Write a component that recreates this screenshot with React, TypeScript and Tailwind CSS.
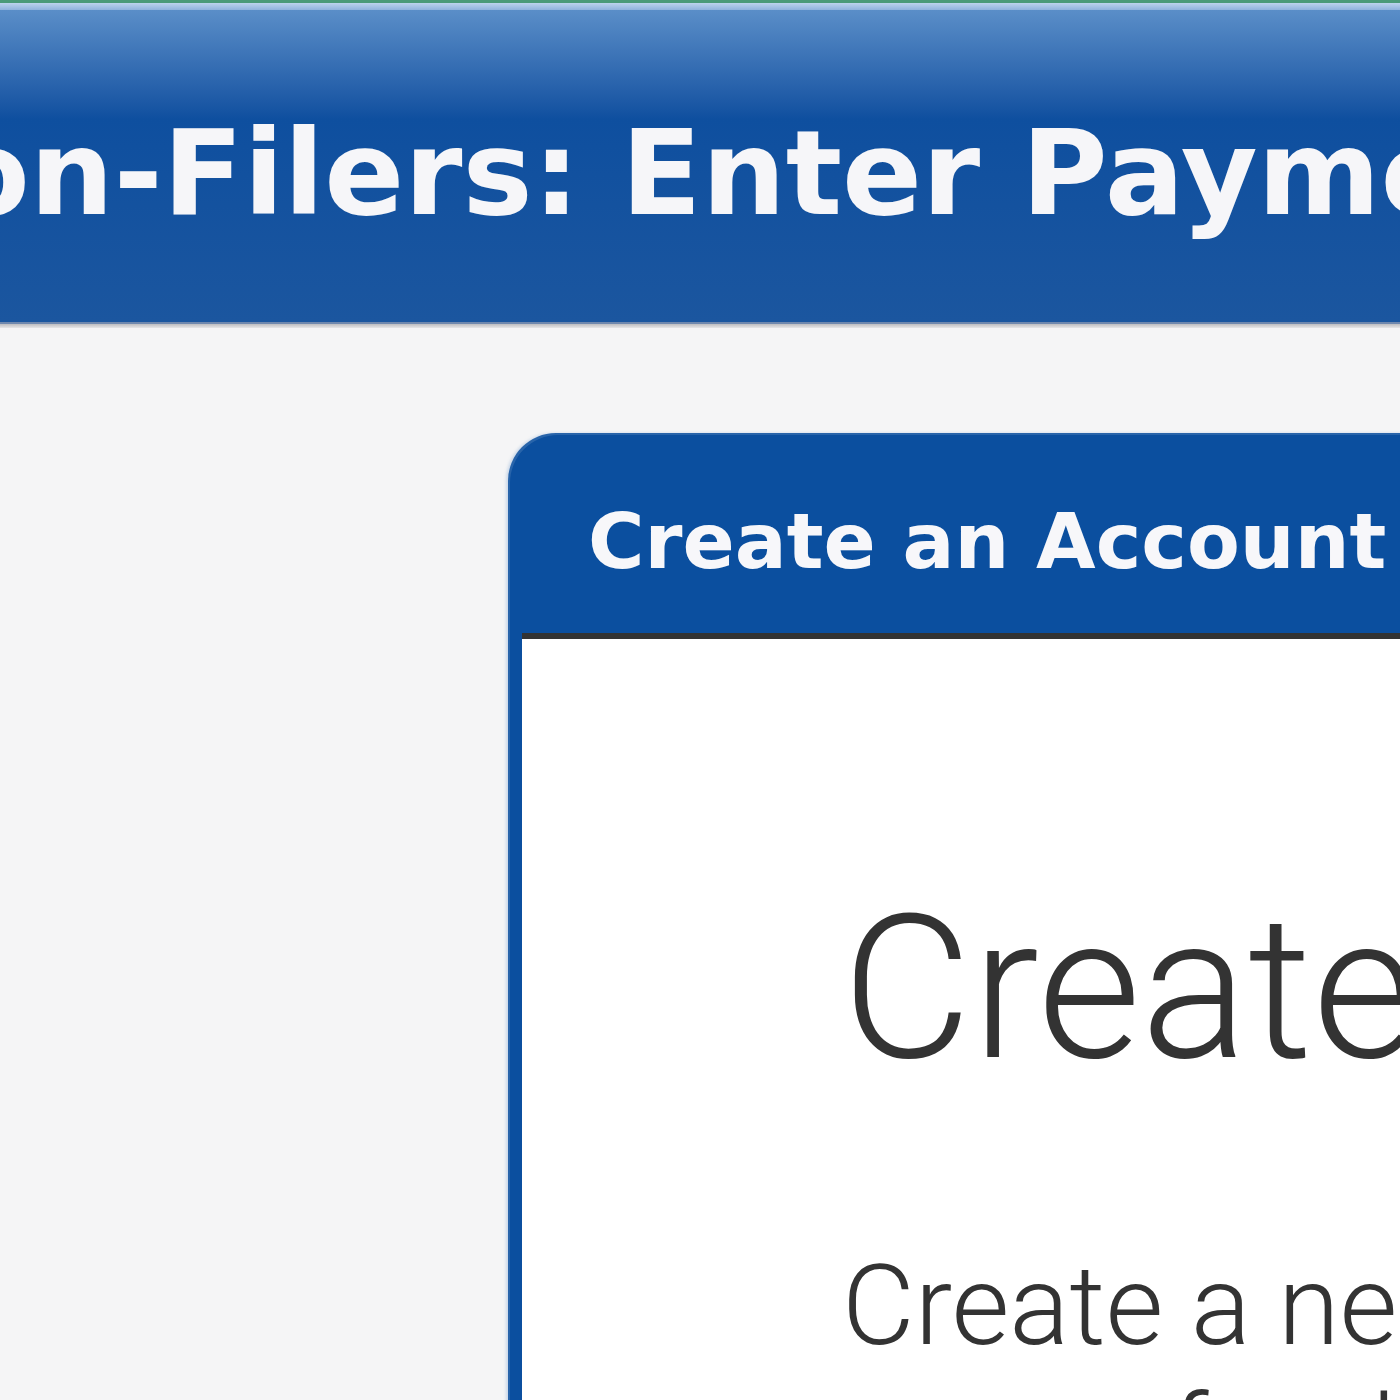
export default function App() {
  return (
    <div className="h-screen w-full overflow-hidden bg-[#f5f5f6]">
      {/* top strips */}
      <div className="h-[3px] bg-[#4a9a78]" />
      <div className="h-[7px] bg-gradient-to-b from-[#bcd3ec] to-[#8fb2dc]" />

      {/* page title bar */}
      <header className="h-[312px] overflow-hidden bg-gradient-to-b from-[#5a8ec8] via-[#0e4f9f] via-35% to-[#1b569f] pt-[104px]">
        <h1
          className="ml-[-150px] whitespace-nowrap text-[118px] font-bold leading-none text-[#f6f6f9]"
          style={{ fontFamily: '"DejaVu Sans", Verdana, sans-serif' }}
        >
          Non-Filers: Enter Payment Info Here
        </h1>
      </header>
      <div className="h-[2px] bg-[#6f88ae]" />
      <div className="h-[4px] bg-gradient-to-b from-[#bdbdc0] to-[#e6e6e8]" />

      {/* account card */}
      <div className="ml-[508px] mt-[105px] w-[1400px] rounded-tl-[48px] bg-[#0b4f9f] pl-[14px] shadow-[-2px_0_3px_rgba(120,160,210,0.35),inset_2px_2px_0_rgba(255,255,255,0.12)]">
        <div className="h-[200px] pt-[70px] pl-[66px]">
          <h2
            className="whitespace-nowrap text-[77px] font-bold leading-none text-[#f7f7fa]"
            style={{ fontFamily: '"DejaVu Sans", Verdana, sans-serif' }}
          >
            Create an Account
          </h2>
        </div>
        <div
          className="h-[900px] border-t-[6px] border-[#333333] bg-white pl-[320px] pt-[250px] text-[#333333]"
          style={{ fontFamily: 'Roboto, "Helvetica Neue", Helvetica, Arial, sans-serif' }}
        >
          <h3 className="whitespace-nowrap text-[200px] font-light leading-none">Create Account</h3>
          <p className="mt-[152px] whitespace-nowrap text-[112px] font-light leading-[130px]">
            Create a new account to have your information
            <br />
            set up for the Non-Filers tool.
          </p>
        </div>
      </div>
    </div>
  )
}
